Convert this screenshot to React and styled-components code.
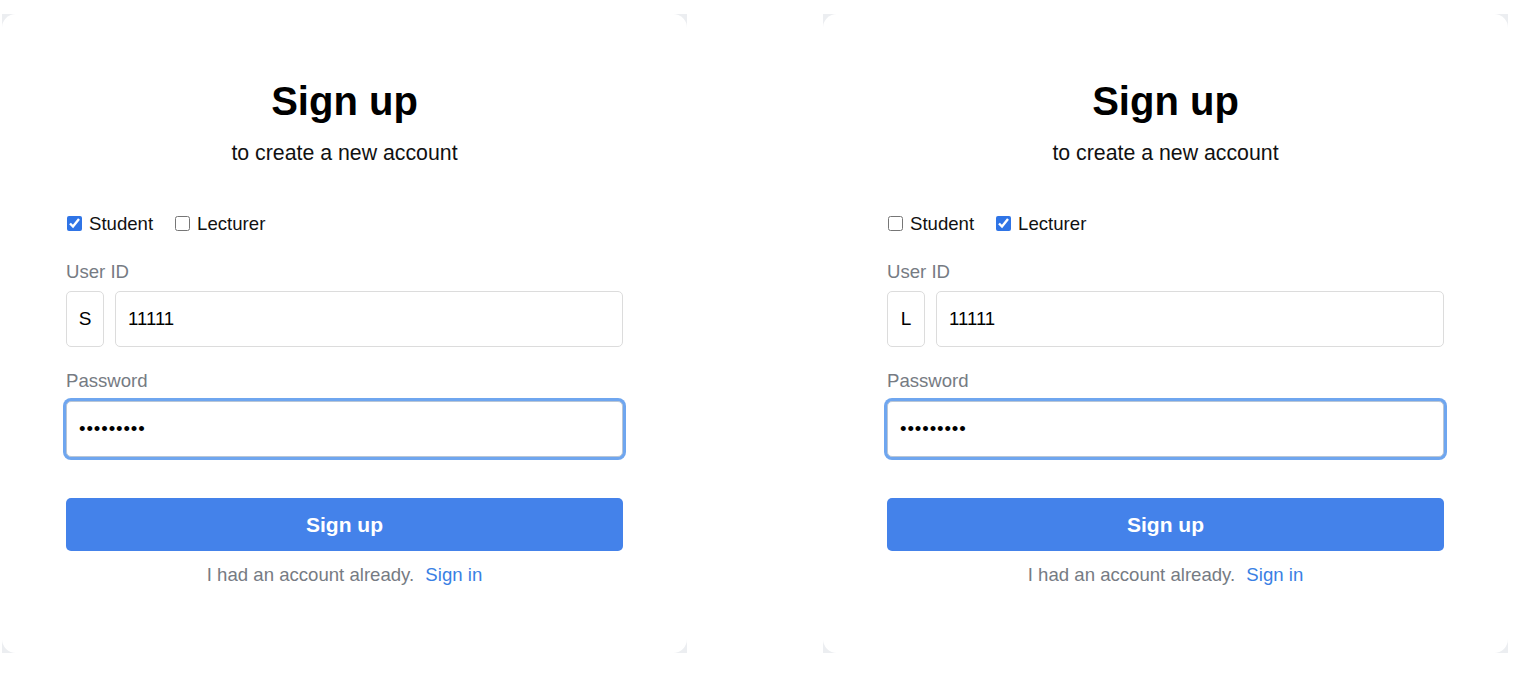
import React from "react";
import styled, { createGlobalStyle } from "styled-components";

const Global = createGlobalStyle`
  html, body { margin: 0; padding: 0; background: #ffffff; }
  body { font-family: "Liberation Sans", Arial, sans-serif; }
  * { box-sizing: border-box; }
`;

const Page = styled.div`
  display: flex;
  gap: 136px;
  padding: 14px 0 0 2px;
`;

const Frame = styled.div`
  width: 685px;
  height: 639px;
  background: #eceef1;
`;

const Card = styled.div`
  width: 100%;
  height: 100%;
  background: #ffffff;
  border-radius: 14px;
  padding: 63px 64px 0 64px;
  display: flex;
  flex-direction: column;
`;

const Title = styled.h1`
  margin: 0;
  font-size: 40px;
  line-height: 48px;
  font-weight: 700;
  text-align: center;
  color: #000;
`;

const Subtitle = styled.p`
  margin: 16px 0 0 0;
  font-size: 21.3px;
  line-height: 25px;
  text-align: center;
  color: #111;
`;

const RoleRow = styled.div`
  display: flex;
  align-items: center;
  gap: 21px;
  margin-top: 46px;
  height: 23px;
`;

const RoleOption = styled.label`
  display: flex;
  align-items: center;
  gap: 7px;
  font-size: 18.6px;
  line-height: 23px;
  color: #111;
`;

const Check = styled.input`
  width: 15px;
  height: 15px;
  margin: 0 0 0 1px;
  accent-color: #2f74e6;
`;

const FieldLabel = styled.div`
  font-size: 18.6px;
  line-height: 23px;
  color: #767b83;
  margin-top: ${(p) => p.$top}px;
`;

const IdRow = styled.div`
  display: flex;
  gap: 11px;
  margin-top: 8px;
`;

const Prefix = styled.div`
  flex: none;
  width: 38px;
  height: 56px;
  border: 1px solid #dcdcdc;
  border-radius: 5px;
  display: flex;
  align-items: center;
  justify-content: center;
  font-size: 19px;
  color: #000;
`;

const TextInput = styled.input`
  flex: ${(p) => (p.$grow ? "1 1 auto" : "none")};
  width: 100%;
  min-width: 0;
  height: 56px;
  border: 1px solid #dcdcdc;
  border-radius: 5px;
  padding: 0 12px;
  font-family: "Liberation Sans", Arial, sans-serif;
  font-size: 18.6px;
  color: #000;
  caret-color: #000;
  background: #fff;
  outline: none;
  margin-top: ${(p) => p.$top || 0}px;
  letter-spacing: ${(p) => (p.$pw ? "0.9px" : "0")};
  box-shadow: ${(p) => (p.$focus ? "0 0 0 3px #6fa6ef" : "none")};
  border-color: ${(p) => (p.$focus ? "#b9c6d6" : "#dcdcdc")};
`;

const Button = styled.button`
  margin-top: 41px;
  height: 53px;
  width: 100%;
  border: none;
  border-radius: 5px;
  background: #4482ea;
  color: #fff;
  font-family: "Liberation Sans", Arial, sans-serif;
  font-size: 21px;
  font-weight: 700;
`;

const Footer = styled.div`
  margin-top: 12px;
  text-align: center;
  font-size: 18.6px;
  line-height: 23px;
  color: #767b83;
`;

const Link = styled.a`
  color: #3a7fe4;
  text-decoration: none;
  margin-left: 6px;
`;

function SignUpCard({ role, focus }) {
  const prefix = role === "student" ? "S" : "L";
  return (
    <Frame>
      <Card>
        <Title>Sign up</Title>
        <Subtitle>to create a new account</Subtitle>
        <RoleRow>
          <RoleOption>
            <Check type="checkbox" checked={role === "student"} readOnly />
            Student
          </RoleOption>
          <RoleOption>
            <Check type="checkbox" checked={role === "lecturer"} readOnly />
            Lecturer
          </RoleOption>
        </RoleRow>
        <FieldLabel $top={25}>User ID</FieldLabel>
        <IdRow>
          <Prefix>{prefix}</Prefix>
          <TextInput $grow type="text" defaultValue="11111" />
        </IdRow>
        <FieldLabel $top={22}>Password</FieldLabel>
        <TextInput
          $top={9}
          $focus
          $pw
          type="password"
          defaultValue="123456789"
          autoFocus={focus}
        />
        <Button>Sign up</Button>
        <Footer>
          I had an account already.
          <Link href="#"> Sign in</Link>
        </Footer>
      </Card>
    </Frame>
  );
}

export default function App() {
  return (
    <>
      <Global />
      <Page>
        <SignUpCard role="student" />
        <SignUpCard role="lecturer" focus />
      </Page>
    </>
  );
}
